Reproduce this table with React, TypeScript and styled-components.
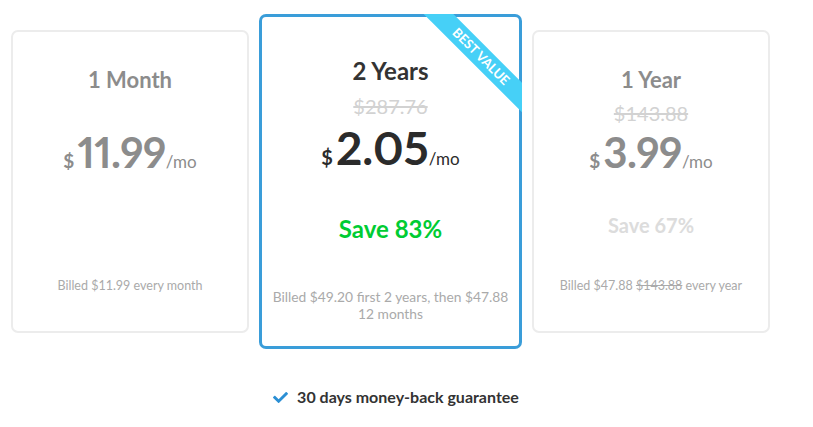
import React from "react";
import styled, { createGlobalStyle } from "styled-components";
import { FaCheck } from "react-icons/fa";

const GlobalStyle = createGlobalStyle`
  body {
    margin: 0;
    background: #fff;
    font-family: 'Lato', 'Liberation Sans', sans-serif;
  }
`;

const Page = styled.div`
  padding: 14px 0 0 11px;
`;

const Plans = styled.div`
  display: flex;
  align-items: center;
  gap: 10px;
`;

// featured card draws its border with an inset shadow so the ribbon can sit on top of it
const Card = styled.div<{ $featured?: boolean }>`
  position: relative;
  overflow: hidden;
  box-sizing: border-box;
  display: flex;
  flex-direction: column;
  align-items: center;
  width: ${(p) => (p.$featured ? "263px" : "238px")};
  height: ${(p) => (p.$featured ? "335px" : "303px")};
  padding: ${(p) => (p.$featured ? "42px 9px 27px" : "33px 6px 37px")};
  border: ${(p) => (p.$featured ? "none" : "2px solid #ececec")};
  box-shadow: ${(p) => (p.$featured ? "inset 0 0 0 3px #3a9dd9" : "none")};
  border-radius: 7px;
  background: #fff;
  text-align: center;
`;

const Title = styled.div<{ $featured?: boolean }>`
  font-size: ${(p) => (p.$featured ? "24px" : "22px")};
  font-weight: 700;
  line-height: 30px;
  color: ${(p) => (p.$featured ? "#333" : "#8c8c8c")};
`;

const OldPrice = styled.div<{ $featured?: boolean }>`
  margin-top: ${(p) => (p.$featured ? "7px" : "5px")};
  min-height: 26px;
  font-size: 20px;
  line-height: 26px;
  color: #d2d2d2;
  text-decoration: line-through;
`;

const Price = styled.div<{ $featured?: boolean }>`
  display: flex;
  align-items: baseline;
  justify-content: center;
  margin-top: ${(p) => (p.$featured ? "3px" : "0")};
  line-height: 1;
  color: ${(p) => (p.$featured ? "#2b2b2b" : "#8c8c8c")};
  white-space: nowrap;
`;

const Currency = styled.span<{ $featured?: boolean }>`
  font-size: ${(p) => (p.$featured ? "20px" : "19px")};
  font-weight: 700;
  margin-right: 3px;
`;

const Amount = styled.span<{ $featured?: boolean }>`
  font-size: ${(p) => (p.$featured ? "46px" : "42px")};
  font-weight: 700;
  line-height: 52px;
  font-variant-numeric: proportional-nums;
  letter-spacing: ${(p) => (p.$featured ? "0" : "-0.5px")};
`;

const Per = styled.span`
  font-size: 17px;
  font-weight: 400;
`;

const Save = styled.div<{ $active?: boolean }>`
  margin-top: ${(p) => (p.$active ? "40px" : "32px")};
  min-height: 30px;
  font-size: ${(p) => (p.$active ? "24px" : "20px")};
  font-weight: 700;
  line-height: 30px;
  color: ${(p) => (p.$active ? "#00cc33" : "#dcdcdc")};
`;

const Billed = styled.div<{ $featured?: boolean }>`
  margin-top: auto;
  font-size: ${(p) => (p.$featured ? "13.8px" : "12.5px")};
  line-height: 17px;
  color: #aaa;

  s {
    text-decoration: line-through;
  }
`;

const Ribbon = styled.div`
  position: absolute;
  left: 142px;
  top: 32px;
  width: 160px;
  height: 21px;
  transform: rotate(45deg);
  background: #46d0f7;
  color: #fff;
  font-size: 13px;
  font-weight: 700;
  line-height: 21px;
  text-align: center;
`;

const Guarantee = styled.div`
  display: flex;
  align-items: center;
  justify-content: center;
  gap: 9px;
  width: 770px;
  margin-top: 38px;
  font-size: 16px;
  font-weight: 700;
  line-height: 20px;
  color: #333;

  svg {
    color: #2b8fd4;
    font-size: 15px;
  }
`;

export default function App() {
  return (
    <Page>
      <GlobalStyle />
      <Plans>
        <Card>
          <Title>1 Month</Title>
          <OldPrice />
          <Price>
            <Currency>$</Currency>
            <Amount>11.99</Amount>
            <Per>/mo</Per>
          </Price>
          <Save />
          <Billed>Billed $11.99 every month</Billed>
        </Card>

        <Card $featured>
          <Ribbon>BEST VALUE</Ribbon>
          <Title $featured>2 Years</Title>
          <OldPrice $featured>$287.76</OldPrice>
          <Price $featured>
            <Currency $featured>$</Currency>
            <Amount $featured>2.05</Amount>
            <Per>/mo</Per>
          </Price>
          <Save $active>Save 83%</Save>
          <Billed $featured>Billed $49.20 first 2 years, then $47.88 12 months</Billed>
        </Card>

        <Card>
          <Title>1 Year</Title>
          <OldPrice>$143.88</OldPrice>
          <Price>
            <Currency>$</Currency>
            <Amount>3.99</Amount>
            <Per>/mo</Per>
          </Price>
          <Save>Save 67%</Save>
          <Billed>
            Billed $47.88 <s>$143.88</s> every year
          </Billed>
        </Card>
      </Plans>

      <Guarantee>
        <FaCheck />
        30 days money-back guarantee
      </Guarantee>
    </Page>
  );
}
